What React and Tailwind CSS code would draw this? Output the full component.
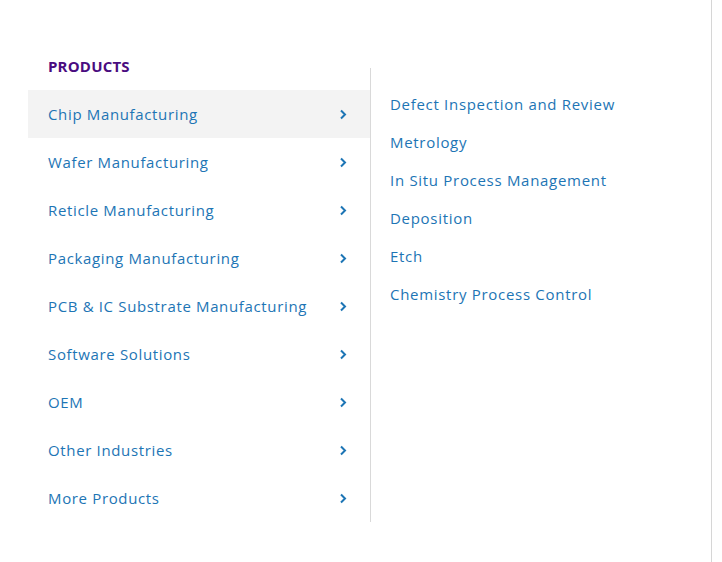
import React from "react";

const left = [
  "Chip Manufacturing",
  "Wafer Manufacturing",
  "Reticle Manufacturing",
  "Packaging Manufacturing",
  "PCB & IC Substrate Manufacturing",
  "Software Solutions",
  "OEM",
  "Other Industries",
  "More Products",
];

const right = [
  "Defect Inspection and Review",
  "Metrology",
  "In Situ Process Management",
  "Deposition",
  "Etch",
  "Chemistry Process Control",
];

function Chevron() {
  return (
    <svg width="8" height="11" viewBox="0 0 8 11" fill="none">
      <path d="M2 1.5 L6 5.5 L2 9.5" stroke="#1d75b5" strokeWidth="2" strokeLinecap="butt" strokeLinejoin="miter" />
    </svg>
  );
}

export default function App() {
  return (
    <div className="w-[722px] h-[562px] bg-white flex" style={{ fontFamily: '"Open Sans", sans-serif' }}>
      <div className="w-[712px] h-full flex flex-col pt-[56px] pl-[28px] border-r border-[#d6d6d6]">
        <div className="pl-[20px] text-[15px] leading-[20px] font-bold tracking-[0.2px] text-[#4a0c80] h-[34px]">PRODUCTS</div>
        <div className="flex">
          <div className="w-[342px] flex flex-col">
            {left.map((t, i) => (
              <div
                key={t}
                className={`h-[48px] flex items-center justify-between pl-[20px] pr-[23px] ${i === 0 ? "bg-[#f3f3f3]" : ""}`}
              >
                <span className="text-[15px] tracking-[0.65px] text-[#1d75b5]">{t}</span>
                <Chevron />
              </div>
            ))}
          </div>
          <div className="w-px bg-[#d9d9d9] -mt-[22px] h-[454px]"></div>
          <div className="flex flex-col pl-[19px] -mt-[5px]">
            {right.map((t) => (
              <div key={t} className="h-[38px] flex items-center text-[15px] tracking-[0.7px] text-[#1d75b5]">
                {t}
              </div>
            ))}
          </div>
        </div>
      </div>
    </div>
  );
}
